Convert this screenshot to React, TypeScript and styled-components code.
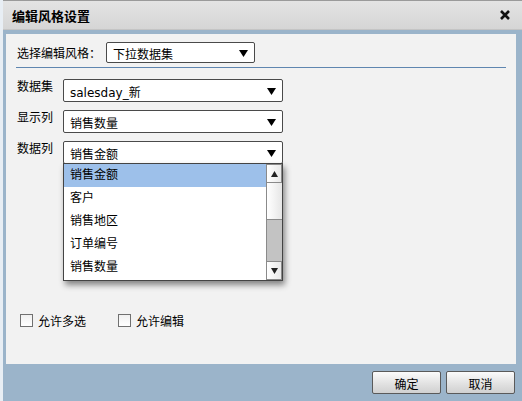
import * as React from "react";
import { styled, createGlobalStyle } from "styled-components";

const GlobalStyle = createGlobalStyle`
	html, body {
		margin: 0;
		padding: 0;
		background: #9bb4ca;
	}
	* {
		box-sizing: border-box;
	}
`;

const FONT = `"Liberation Sans", "Noto Sans CJK SC", sans-serif`;

const Window = styled.div`
	width: 522px;
	height: 401px;
	display: flex;
	flex-direction: column;
	background: #9bb4ca;
	border-left: 3px solid #e8eef4;
	font-family: ${FONT};
	font-size: 12px;
	color: #000;
	overflow: hidden;
`;

const TitleBar = styled.div`
	height: 30px;
	flex: none;
	display: flex;
	align-items: center;
	justify-content: space-between;
	margin-left: -3px;
	padding: 0 12px 0 12px;
	background: linear-gradient(#e3e3e3, #d5d5d5);
	border-top: 1px solid #9a9a9a;
	border-bottom: 1px solid #c4c4c4;
`;

const Title = styled.span`
	font-size: 13px;
	font-weight: bold;
`;

const Panel = styled.div`
	height: 330px;
	flex: none;
	margin: 4px 6px 0 3px;
	background: #f2f2f2;
	padding: 8px 10px 0 11px;
	display: flex;
	flex-direction: column;
`;

const StyleRow = styled.div`
	display: flex;
	align-items: center;
	height: 21px;
	gap: 5px;
`;

const Separator = styled.div`
	height: 1px;
	background: #5f86b0;
	margin: 4px 0 0 -1px;
	width: 490px;
`;

const FieldList = styled.div`
	margin-top: 11px;
	display: flex;
	flex-direction: column;
	gap: 8px;
`;

const FieldRow = styled.div`
	display: flex;
	align-items: flex-start;
	height: 23px;
`;

const Label = styled.span`
	width: 46px;
	flex: none;
	line-height: 17px;
`;

const SelectWrap = styled.div`
	position: relative;
`;

const Select = styled.div<{ $w: number; $h: number }>`
	width: ${(p) => p.$w}px;
	height: ${(p) => p.$h}px;
	background: #fff;
	border: 1px solid #4a4a4a;
	border-radius: 2px;
	display: flex;
	align-items: center;
	justify-content: space-between;
	padding: 2px 6px 0 6px;
`;

const Value = styled.span`
	font-size: 12px;
`;

const Latin = styled.span`
	font-family: "DejaVu Sans", "Noto Sans CJK SC", sans-serif;
	font-size: 12px;
`;

const Dropdown = styled.div`
	position: absolute;
	top: 22px;
	left: 0;
	width: 220px;
	height: 118px;
	background: #fff;
	border: 1px solid #444;
	box-shadow: 2px 4px 6px rgba(0, 0, 0, 0.45);
	display: flex;
	z-index: 2;
`;

const Items = styled.div`
	flex: 1;
	display: flex;
	flex-direction: column;
`;

const Item = styled.div<{ $active?: boolean }>`
	height: 23px;
	line-height: 23px;
	padding-left: 6px;
	background: ${(p) => (p.$active ? "#9dc0ea" : "transparent")};
`;

const ScrollBar = styled.div`
	width: 16px;
	flex: none;
	display: flex;
	flex-direction: column;
	border-left: 1px solid #8a8a8a;
	background: #c3c3c3;
`;

const ScrollBtn = styled.div`
	height: 19px;
	flex: none;
	display: flex;
	align-items: center;
	justify-content: center;
	background: linear-gradient(90deg, #ffffff, #e9e9e9);
	border: 1px solid #8a8a8a;
	border-left: none;
`;

const Thumb = styled.div`
	height: 37px;
	flex: none;
	background: linear-gradient(90deg, #ffffff, #e6e6e6);
	border-bottom: 1px solid #8a8a8a;
`;

const Track = styled.div`
	flex: 1;
`;

const CheckRow = styled.div`
	margin-top: 148px;
	display: flex;
	align-items: center;
	gap: 32px;
	padding-left: 3px;
`;

const CheckItem = styled.label`
	display: flex;
	align-items: center;
	gap: 5px;
`;

const Box = styled.span`
	width: 13px;
	height: 13px;
	border: 1px solid #707070;
	background: linear-gradient(#f0f0f0, #ffffff);
`;

const Footer = styled.div`
	flex: 1;
	display: flex;
	justify-content: flex-end;
	align-items: flex-start;
	gap: 5px;
	padding: 7px 7px 0 0;
`;

const Button = styled.button`
	width: 69px;
	height: 23px;
	font-family: ${FONT};
	font-size: 12px;
	color: #000;
	border: 1px solid #5a5a5a;
	border-radius: 2px;
	background: linear-gradient(#fbfbfb, #e2e2e2 55%, #d0d0d0);
	padding: 2px 0 0;
`;

const Arrow = () => (
	<svg width="9" height="7" viewBox="0 0 9 7">
		<polygon points="0,0 9,0 4.5,7" fill="#000" />
	</svg>
);

const SmallArrow = ({ up }: { up?: boolean }) => (
	<svg width="7" height="6" viewBox="0 0 7 6">
		<polygon points={up ? "0,6 7,6 3.5,0" : "0,0 7,0 3.5,6"} fill="#222" />
	</svg>
);

const CloseIcon = () => (
	<svg width="10" height="10" viewBox="0 0 10 10">
		<path d="M1 1 L9 9 M9 1 L1 9" stroke="#111" strokeWidth="2.6" />
	</svg>
);

const items = ["销售金额", "客户", "销售地区", "订单编号", "销售数量"];

const App = () => {
	return (
		<>
			<GlobalStyle />
			<Window>
				<TitleBar>
					<Title>编辑风格设置</Title>
					<CloseIcon />
				</TitleBar>
				<Panel>
					<StyleRow>
						<span>选择编辑风格：</span>
						<Select $w={149} $h={21}>
							<Value>下拉数据集</Value>
							<Arrow />
						</Select>
					</StyleRow>
					<Separator />
					<FieldList>
						<FieldRow>
							<Label>数据集</Label>
							<Select $w={220} $h={23}>
								<Latin>salesday_新</Latin>
								<Arrow />
							</Select>
						</FieldRow>
						<FieldRow>
							<Label>显示列</Label>
							<Select $w={220} $h={23}>
								<Value>销售数量</Value>
								<Arrow />
							</Select>
						</FieldRow>
						<FieldRow>
							<Label>数据列</Label>
							<SelectWrap>
								<Select $w={220} $h={23}>
									<Value>销售金额</Value>
									<Arrow />
								</Select>
								<Dropdown>
									<Items>
										{items.map((it, i) => (
											<Item key={it} $active={i === 0}>
												{it}
											</Item>
										))}
									</Items>
									<ScrollBar>
										<ScrollBtn>
											<SmallArrow up />
										</ScrollBtn>
										<Thumb />
										<Track />
										<ScrollBtn>
											<SmallArrow />
										</ScrollBtn>
									</ScrollBar>
								</Dropdown>
							</SelectWrap>
						</FieldRow>
					</FieldList>
					<CheckRow>
						<CheckItem>
							<Box />
							允许多选
						</CheckItem>
						<CheckItem>
							<Box />
							允许编辑
						</CheckItem>
					</CheckRow>
				</Panel>
				<Footer>
					<Button>确定</Button>
					<Button>取消</Button>
				</Footer>
			</Window>
		</>
	);
};

export default App;
